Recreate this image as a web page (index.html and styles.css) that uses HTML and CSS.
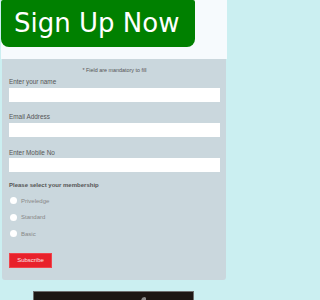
FILE: index.html
```html
<!DOCTYPE html>
<html>
<head>
<meta charset="utf-8">
<meta name="viewport" content="width=227">
<link rel="stylesheet" href="styles.css">
</head>
<body>
<div class="page">
  <div class="top">
    <div class="hero">Sign Up Now</div>
  </div>
  <form class="form">
    <p class="note">* Field are mandatory to fill</p>
    <div class="field">
      <label class="label">Enter your name</label>
      <input class="input" type="text">
    </div>
    <div class="field">
      <label class="label">Email Address</label>
      <input class="input" type="text">
    </div>
    <div class="field">
      <label class="label">Enter Mobile No</label>
      <input class="input" type="text">
    </div>
    <div class="group-title">Please select your membership</div>
    <div class="radios">
      <label class="radio"><input type="radio" name="m" class="dot"><span>Priveledge</span></label>
      <label class="radio"><input type="radio" name="m" class="dot"><span>Standard</span></label>
      <label class="radio"><input type="radio" name="m" class="dot"><span>Basic</span></label>
    </div>
    <button class="btn" type="button">Subscribe</button>
  </form>
  <div class="media">
    <svg class="media-icon" width="7" height="6" viewBox="0 0 7 6"><path d="M1 6 C1 2 3 1 5 1 L6 2 L6 6 Z" fill="#8c8c8c"/></svg>
  </div>
</div>
</body>
</html>
```
FILE: styles.css
```css
html, body {
  margin: 0;
  padding: 0;
}
body {
  background: #cbeff1;
  font-family: "Liberation Sans", Arial, sans-serif;
  overflow: hidden;
}
.page {
  width: 227px;
  height: 300px;
  overflow: hidden;
}
.top {
  margin-left: 1px;
  height: 59px;
  background: #f6fafd;
}
.hero {
  width: 181px;
  height: 47px;
  padding-left: 13px;
  background: #008000;
  color: #fff;
  font-family: "DejaVu Sans", sans-serif;
  font-size: 26px;
  line-height: 47px;
  border-radius: 2px 2px 8px 8px;
}
.form {
  margin: 0 1.5px 0 2px;
  padding: 7.5px 5.5px 12.5px 7px;
  background: #cad7dd;
  border-radius: 0 0 3px 3px;
}
.note {
  margin: 0 0 4.7px;
  text-align: center;
  font-size: 5.4px;
  line-height: 7px;
  color: #555;
}
.field {
  margin-bottom: 11.5px;
}
.label {
  display: block;
  font-size: 6.4px;
  line-height: 7px;
  color: #555;
  margin-bottom: 2.5px;
}
.input {
  display: block;
  width: 100%;
  height: 14.2px;
  box-sizing: border-box;
  border: none;
  margin: 0;
  padding: 0;
  background: #fff;
  -webkit-appearance: none;
  appearance: none;
}
.group-title {
  margin-top: -1.3px;
  font-size: 6px;
  font-weight: bold;
  line-height: 7px;
  color: #555;
}
.radios {
  margin-top: 2.8px;
  display: flex;
  flex-direction: column;
}
.radio {
  display: flex;
  align-items: center;
  height: 16.7px;
  gap: 4px;
  font-size: 6px;
  color: #888;
}
.dot {
  -webkit-appearance: none;
  appearance: none;
  width: 7px;
  height: 7px;
  margin: 0 0 0 1px;
  border-radius: 50%;
  background: #fff;
  border: none;
}
.btn {
  display: block;
  margin-top: 10.6px;
  height: 15px;
  width: 43px;
  padding: 0;
  border: 1px solid #f0444c;
  background: #e8212b;
  color: #fde4e6;
  font-family: "Liberation Sans", Arial, sans-serif;
  font-size: 6px;
}
.media {
  margin: 10.5px 0 0 33px;
  width: 161px;
  height: 40px;
  border: 1px solid #6e6e6e;
  background: #1c1613;
  padding: 4px 0 0 0;
  box-sizing: border-box;
  display: flex;
}
.media-icon {
  margin-left: 106px;
}
```
